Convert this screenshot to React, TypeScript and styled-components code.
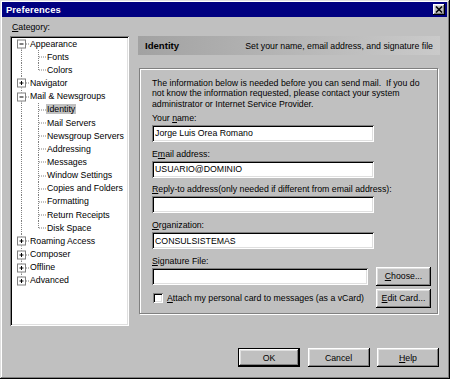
import React from "react";
import styled, { createGlobalStyle, css } from "styled-components";

const GlobalStyle = createGlobalStyle`
  html, body { margin: 0; padding: 0; background: #c0c0c0; }
  body {
    font-family: "Liberation Sans", Arial, sans-serif;
    font-size: 8.75px;
    color: #000;
  }
  *, *::before, *::after { box-sizing: border-box; }
`;

const raised = css`
  box-shadow: inset -1px -1px 0 #000, inset 1px 1px 0 #fff,
    inset -2px -2px 0 #808080, inset 2px 2px 0 #dfdfdf;
`;

const sunken = css`
  box-shadow: inset 1px 1px 0 #808080, inset -1px -1px 0 #fff,
    inset 2px 2px 0 #000, inset -2px -2px 0 #dfdfdf;
`;

const Window = styled.div`
  width: 450px;
  height: 379px;
  background: #c0c0c0;
  padding: 2px 3px 2px 2px;
  display: flex;
  flex-direction: column;
  box-shadow: inset -1px -1px 0 #000, inset 1px 1px 0 #dfdfdf,
    inset -2px -2px 0 #808080, inset 2px 2px 0 #fff;
`;

const TitleBar = styled.div`
  height: 15px;
  background: #000080;
  display: flex;
  align-items: center;
  justify-content: space-between;
  padding: 0 2px 0 4px;
`;

const TitleText = styled.span`
  color: #fff;
  font-weight: bold;
  font-size: 9.4px;
  letter-spacing: 0.1px;
`;

const CloseButton = styled.div`
  width: 12px;
  height: 11px;
  background: #c0c0c0;
  display: flex;
  align-items: center;
  justify-content: center;
  ${raised}
`;

const Main = styled.div`
  display: grid;
  grid-template-columns: 119px 302px;
  grid-template-rows: 11px 290px;
  column-gap: 9px;
  row-gap: 3px;
  padding: 5px 0 0 8px;
`;

const CategoryLabel = styled.div`
  line-height: 11px;
  padding-left: 2px;
`;

const Tree = styled.div`
  grid-column: 1;
  grid-row: 2;
  background: #fff;
  padding: 1px 2px 2px 2px;
  overflow: hidden;
  ${sunken}
`;

const TreeRow = styled.div`
  height: 13.17px;
  display: flex;
  align-items: center;
  white-space: nowrap;
`;

const TreeLabel = styled.span<{ $selected?: boolean }>`
  line-height: 10px;
  padding: 0 1px;
  background: ${(p) => (p.$selected ? "#c0c0c0" : "transparent")};
`;

const RightPanel = styled.div`
  grid-column: 2;
  grid-row: 2;
  display: flex;
  flex-direction: column;
`;

const Header = styled.div`
  height: 19px;
  background: linear-gradient(to right, #a2a2a2 0%, #b4b4b4 45%, #cacaca 100%);
  display: flex;
  align-items: center;
  justify-content: space-between;
  padding: 0 7px;
`;

const HeaderTitle = styled.span`
  font-weight: bold;
  font-size: 9.6px;
`;

const HeaderDesc = styled.span``;

const Group = styled.div`
  margin: 13px 2px 0 1px;
  height: 246px;
  border: 1px solid #808080;
  box-shadow: 1px 1px 0 #fff, inset 1px 1px 0 #fff;
  padding: 8.6px 6px 0 12px;
  display: flex;
  flex-direction: column;
`;

const Intro = styled.p`
  margin: 0 0 3.6px 0;
  line-height: 10.6px;
  white-space: nowrap;
`;

const Field = styled.div<{ $last?: boolean }>`
  display: flex;
  flex-direction: column;
  margin-bottom: ${(p) => (p.$last ? 0 : 6.75)}px;
`;

const FieldLabel = styled.label`
  line-height: 11px;
  height: 11px;
  margin-bottom: 1px;
`;

const TextInput = styled.input<{ $width: number }>`
  width: ${(p) => p.$width}px;
  height: 17px;
  border: none;
  outline: none;
  background: #fff;
  padding: 0 3px;
  margin: 0;
  font-family: "Liberation Sans", Arial, sans-serif;
  font-size: 8.75px;
  color: #000;
  ${sunken}
`;

const InlineRow = styled.div`
  display: flex;
  align-items: center;
  height: 17px;
  gap: 8px;
`;

const CheckRow = styled.div`
  display: flex;
  align-items: center;
  height: 19px;
  margin-top: 4px;
`;

const CheckBox = styled.span`
  width: 10px;
  height: 10px;
  margin-left: 1px;
  background: #fff;
  ${sunken}
`;

const CheckLabel = styled.span`
  margin-left: 4px;
`;

const PushButton = styled.button<{ $width: number; $default?: boolean }>`
  width: ${(p) => p.$width}px;
  height: 19px;
  flex: none;
  margin: 0;
  padding: 0;
  border: ${(p) => (p.$default ? "1px solid #000" : "none")};
  background: #c0c0c0;
  font-family: "Liberation Sans", Arial, sans-serif;
  font-size: 8.75px;
  color: #000;
  ${raised}
`;

const PushRight = styled.div`
  margin-left: auto;
  display: flex;
`;

const Footer = styled.div`
  margin-top: auto;
  display: flex;
  justify-content: flex-end;
  gap: 7.5px;
  padding: 0 8px 10px 0;
`;

type Node = {
  label: string;
  level: 0 | 1;
  expander?: "plus" | "minus";
  last?: boolean;
  first?: boolean;
  selected?: boolean;
};

const nodes: Node[] = [
  { label: "Appearance", level: 0, expander: "minus", first: true },
  { label: "Fonts", level: 1 },
  { label: "Colors", level: 1, last: true },
  { label: "Navigator", level: 0, expander: "plus" },
  { label: "Mail & Newsgroups", level: 0, expander: "minus" },
  { label: "Identity", level: 1, selected: true },
  { label: "Mail Servers", level: 1 },
  { label: "Newsgroup Servers", level: 1 },
  { label: "Addressing", level: 1 },
  { label: "Messages", level: 1 },
  { label: "Window Settings", level: 1 },
  { label: "Copies and Folders", level: 1 },
  { label: "Formatting", level: 1 },
  { label: "Return Receipts", level: 1 },
  { label: "Disk Space", level: 1, last: true },
  { label: "Roaming Access", level: 0, expander: "plus" },
  { label: "Composer", level: 0, expander: "plus" },
  { label: "Offline", level: 0, expander: "plus" },
  { label: "Advanced", level: 0, expander: "plus", last: true },
];

const RH = 13.17;
const CY = 6.5;
const DOT = "#808080";

const TreeGlyph: React.FC<{ node: Node }> = ({ node }) => {
  if (node.level === 0) {
    return (
      <svg width={17} height={RH} style={{ flex: "none" }}>
        {!node.first && (
          <line x1={9.5} y1={0} x2={9.5} y2={CY - 4} stroke={DOT} strokeDasharray="1 1" />
        )}
        {!node.last && (
          <line x1={9.5} y1={CY + 5} x2={9.5} y2={RH} stroke={DOT} strokeDasharray="1 1" />
        )}
        <line x1={14} y1={CY + 0.5} x2={17} y2={CY + 0.5} stroke={DOT} strokeDasharray="1 1" />
        <rect x={5.5} y={CY - 3.5} width={8} height={8} fill="#fff" stroke={DOT} />
        <line x1={7.5} y1={CY + 0.5} x2={11.5} y2={CY + 0.5} stroke="#000" />
        {node.expander === "plus" && (
          <line x1={9.5} y1={CY - 1.5} x2={9.5} y2={CY + 2.5} stroke="#000" />
        )}
      </svg>
    );
  }
  return (
    <svg width={34} height={RH} style={{ flex: "none" }}>
      <line x1={9.5} y1={0} x2={9.5} y2={RH} stroke={DOT} strokeDasharray="1 1" />
      <line x1={26.5} y1={0} x2={26.5} y2={node.last ? CY + 0.5 : RH} stroke={DOT} strokeDasharray="1 1" />
      <line x1={27} y1={CY + 0.5} x2={34} y2={CY + 0.5} stroke={DOT} strokeDasharray="1 1" />
    </svg>
  );
};

export default function App() {
  return (
    <>
      <GlobalStyle />
      <Window>
        <TitleBar>
          <TitleText>Preferences</TitleText>
          <CloseButton>
            <svg width={8} height={7} viewBox="0 0 8 7">
              <path d="M1 0.5 L7 6.5 M7 0.5 L1 6.5" stroke="#000" strokeWidth={1.5} />
            </svg>
          </CloseButton>
        </TitleBar>
        <Main>
          <CategoryLabel>
            <u>C</u>ategory:
          </CategoryLabel>
          <div />
          <Tree>
            {nodes.map((n) => (
              <TreeRow key={n.label}>
                <TreeGlyph node={n} />
                <TreeLabel $selected={n.selected}>{n.label}</TreeLabel>
              </TreeRow>
            ))}
          </Tree>
          <RightPanel>
            <Header>
              <HeaderTitle>Identity</HeaderTitle>
              <HeaderDesc>Set your name, email address, and signature file</HeaderDesc>
            </Header>
            <Group>
              <Intro>
                The information below is needed before you can send mail.&nbsp; If you do
                <br />
                not know the information requested, please contact your system
                <br />
                administrator or Internet Service Provider.
              </Intro>
              <Field>
                <FieldLabel>
                  Your <u>n</u>ame:
                </FieldLabel>
                <TextInput $width={222} readOnly value="Jorge Luis Orea Romano" />
              </Field>
              <Field>
                <FieldLabel>
                  E<u>m</u>ail address:
                </FieldLabel>
                <TextInput $width={222} readOnly value="USUARIO@DOMINIO" />
              </Field>
              <Field>
                <FieldLabel>
                  <u>R</u>eply-to address(only needed if different from email address):
                </FieldLabel>
                <TextInput $width={222} readOnly value="" />
              </Field>
              <Field>
                <FieldLabel>
                  <u>O</u>rganization:
                </FieldLabel>
                <TextInput $width={222} readOnly value="CONSULSISTEMAS" />
              </Field>
              <Field $last>
                <FieldLabel>
                  <u>S</u>ignature File:
                </FieldLabel>
                <InlineRow>
                  <TextInput $width={216} readOnly value="" />
                  <PushButton $width={55}>
                    <u>C</u>hoose...
                  </PushButton>
                </InlineRow>
              </Field>
              <CheckRow>
                <CheckBox />
                <CheckLabel>
                  <u>A</u>ttach my personal card to messages (as a vCard)
                </CheckLabel>
                <PushRight>
                  <PushButton $width={55}>
                    <u>E</u>dit Card...
                  </PushButton>
                </PushRight>
              </CheckRow>
            </Group>
          </RightPanel>
        </Main>
        <Footer>
          <PushButton $width={62} $default>
            OK
          </PushButton>
          <PushButton $width={62}>Cancel</PushButton>
          <PushButton $width={62}>
            <u>H</u>elp
          </PushButton>
        </Footer>
      </Window>
    </>
  );
}
